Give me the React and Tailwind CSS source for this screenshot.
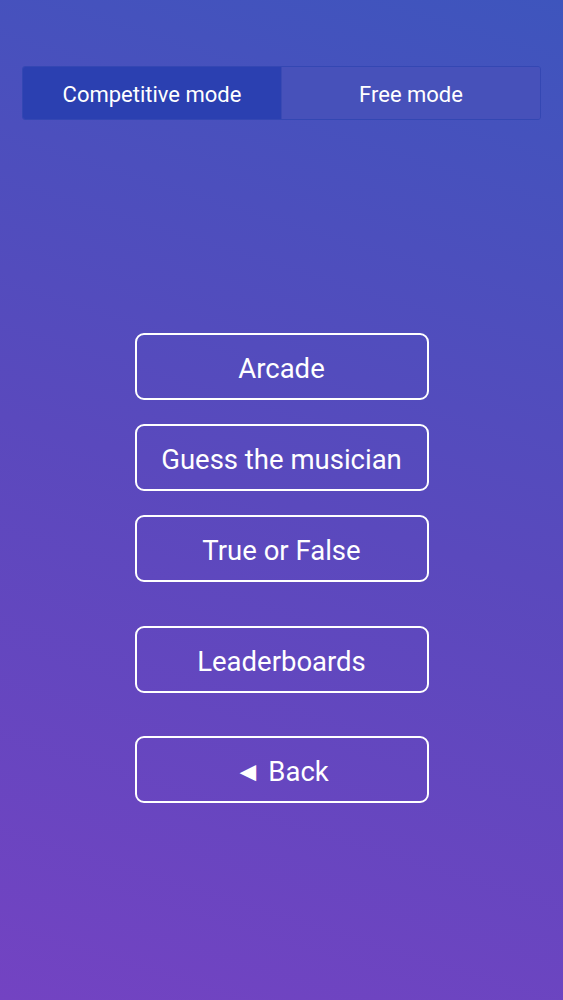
import React, { useState } from "react";

const menuItems = [
  { label: "Arcade", gap: "mt-0" },
  { label: "Guess the musician", gap: "mt-[24px]" },
  { label: "True or False", gap: "mt-[24px]" },
  { label: "Leaderboards", gap: "mt-[44px]" },
  { label: "◄ Back", gap: "mt-[43px]" },
];

const App = () => {
  const [mode, setMode] = useState("competitive");

  return (
    <div
      className="min-h-screen w-full bg-linear-[197deg] from-[#3e55bd] via-[#5a49bd] to-[#7343c2] text-white"
      style={{ fontFamily: "Roboto, 'Noto Sans', sans-serif" }}
    >
      <div className="px-[22px] pt-[66px]">
        {/* Mode tabs */}
        <div className="flex h-[54px] overflow-hidden rounded-[3px] border border-[#3447b3]">
          <button
            onClick={() => setMode("competitive")}
            className={`flex flex-1 items-center justify-center pt-[2px] text-[22px] ${
              mode === "competitive" ? "bg-[#2b40b1]" : "bg-[#4751ba]"
            }`}
          >
            Competitive mode
          </button>
          <button
            onClick={() => setMode("free")}
            className={`flex flex-1 items-center justify-center border-l border-[#3a4ab4] pt-[2px] text-[22px] ${
              mode === "free" ? "bg-[#2b40b1]" : "bg-[#4751ba]"
            }`}
          >
            Free mode
          </button>
        </div>
      </div>

      {/* Menu */}
      <div className="mt-[213px] flex flex-col items-center">
        {menuItems.map((item) => (
          <button
            key={item.label}
            className={`${item.gap} flex h-[67px] w-[294px] items-center justify-center rounded-[9px] border-2 border-white pt-[4px] text-[27.5px]`}
          >
            {item.label}
          </button>
        ))}
      </div>
    </div>
  );
};

export default App;
